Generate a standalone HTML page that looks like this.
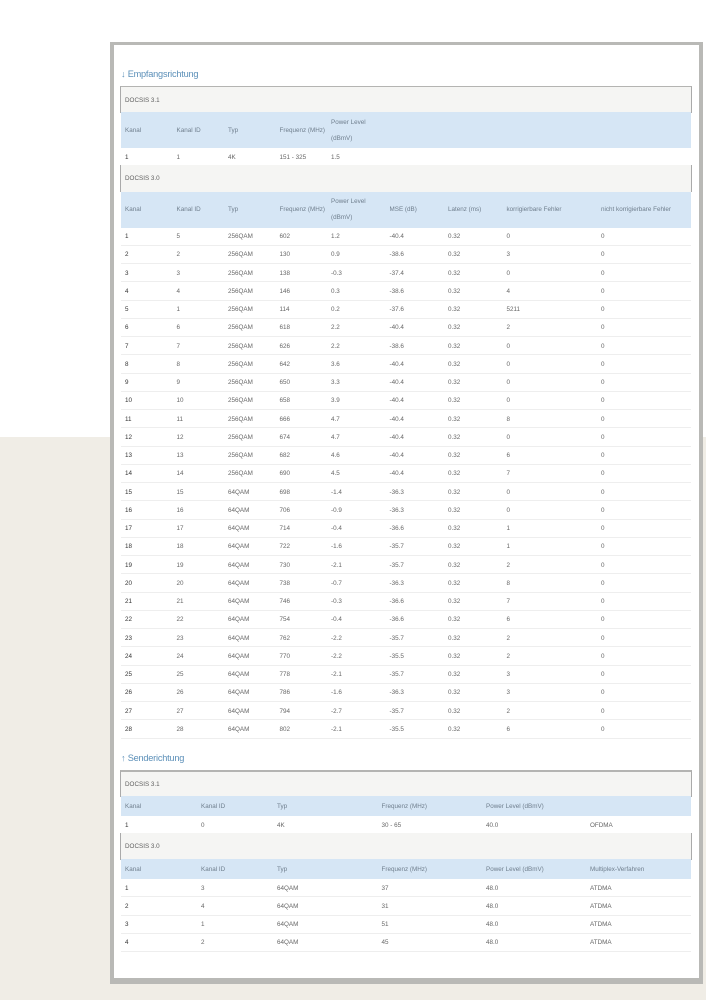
<!DOCTYPE html>
<html lang="de"><head><meta charset="utf-8"><title>Kabelinformationen</title>
<style>
html,body{margin:0;padding:0;background:#fff}
body{width:706px;height:999px;position:relative;overflow:hidden;font-family:"Liberation Sans",sans-serif;font-size:6.3px;color:#666;filter:blur(.35px)}
#bg{position:absolute;left:0;top:436.5px;width:706px;height:563px;background:#f0ede6}
#panel{position:absolute;left:110px;top:42px;width:593px;height:942px;box-sizing:border-box;background:#fff;border:4px solid #b9b9b6;border-top-width:3px;border-bottom-width:6px}
.t{position:absolute;left:121px;color:#5b8fb8;font-size:9.2px;letter-spacing:-.22px;line-height:14px;white-space:nowrap}
.h{position:absolute;left:120px;width:572px;box-sizing:border-box;background:#f5f5f3;border-left:1px solid #aaa;border-right:1px solid #aaa;height:27px;line-height:27px;padding-left:4px;color:#5f5f5f;white-space:nowrap}
.h.top{border-top:1px solid #b4b4b2;line-height:27px}
.b{position:absolute;left:121px;width:570px;background:#d6e6f5}
.r{position:absolute;left:121px;width:570px;height:18.25px;box-sizing:border-box;border-bottom:1px solid #eee;line-height:18px}
.n{border-bottom:0}
.r span,.b span{position:absolute;top:.5px;white-space:nowrap}
.b span{color:#6f7e8d}
.r span:first-child{color:#333;font-weight:normal}
.a span:nth-child(1){left:4px}.a span:nth-child(2){left:55.5px}.a span:nth-child(3){left:107px}.a span:nth-child(4){left:158.5px}.a span:nth-child(5){left:210px}.a span:nth-child(6){left:268.5px}.a span:nth-child(7){left:327px}.a span:nth-child(8){left:385.5px}.a span:nth-child(9){left:480px}
.c span:nth-child(1){left:4px}.c span:nth-child(2){left:80px}.c span:nth-child(3){left:156px}.c span:nth-child(4){left:260.5px}.c span:nth-child(5){left:365px}.c span:nth-child(6){left:469px}
.b.a{line-height:36px;height:36px}
.b.a span.two{top:2.5px;line-height:16px}
.b.c{height:20px;line-height:20px}
</style></head><body>
<div id="bg"></div>
<div id="panel"></div>

<div class="t" style="top:67px">↓ Empfangsrichtung</div>
<div class="h top" style="top:86px">DOCSIS 3.1</div>
<div class="b a" style="top:112px"><span>Kanal</span><span>Kanal ID</span><span>Typ</span><span>Frequenz (MHz)</span><span class="two">Power Level<br>(dBmV)</span></div>
<div class="r a n" style="top:148px"><span>1</span><span>1</span><span>4K</span><span>151 - 325</span><span>1.5</span></div>
<div class="h" style="top:165px">DOCSIS 3.0</div>
<div class="b a" style="top:191.5px"><span>Kanal</span><span>Kanal ID</span><span>Typ</span><span>Frequenz (MHz)</span><span class="two">Power Level<br>(dBmV)</span><span>MSE (dB)</span><span>Latenz (ms)</span><span>korrigierbare Fehler</span><span>nicht korrigierbare Fehler</span></div>

<div class="r a" style="top:227.5px"><span>1</span><span>5</span><span>256QAM</span><span>602</span><span>1.2</span><span>-40.4</span><span>0.32</span><span>0</span><span>0</span></div>
<div class="r a" style="top:245.75px"><span>2</span><span>2</span><span>256QAM</span><span>130</span><span>0.9</span><span>-38.6</span><span>0.32</span><span>3</span><span>0</span></div>
<div class="r a" style="top:264px"><span>3</span><span>3</span><span>256QAM</span><span>138</span><span>-0.3</span><span>-37.4</span><span>0.32</span><span>0</span><span>0</span></div>
<div class="r a" style="top:282.25px"><span>4</span><span>4</span><span>256QAM</span><span>146</span><span>0.3</span><span>-38.6</span><span>0.32</span><span>4</span><span>0</span></div>
<div class="r a" style="top:300.5px"><span>5</span><span>1</span><span>256QAM</span><span>114</span><span>0.2</span><span>-37.6</span><span>0.32</span><span>5211</span><span>0</span></div>
<div class="r a" style="top:318.75px"><span>6</span><span>6</span><span>256QAM</span><span>618</span><span>2.2</span><span>-40.4</span><span>0.32</span><span>2</span><span>0</span></div>
<div class="r a" style="top:337px"><span>7</span><span>7</span><span>256QAM</span><span>626</span><span>2.2</span><span>-38.6</span><span>0.32</span><span>0</span><span>0</span></div>
<div class="r a" style="top:355.25px"><span>8</span><span>8</span><span>256QAM</span><span>642</span><span>3.6</span><span>-40.4</span><span>0.32</span><span>0</span><span>0</span></div>
<div class="r a" style="top:373.5px"><span>9</span><span>9</span><span>256QAM</span><span>650</span><span>3.3</span><span>-40.4</span><span>0.32</span><span>0</span><span>0</span></div>
<div class="r a" style="top:391.75px"><span>10</span><span>10</span><span>256QAM</span><span>658</span><span>3.9</span><span>-40.4</span><span>0.32</span><span>0</span><span>0</span></div>
<div class="r a" style="top:410px"><span>11</span><span>11</span><span>256QAM</span><span>666</span><span>4.7</span><span>-40.4</span><span>0.32</span><span>8</span><span>0</span></div>
<div class="r a" style="top:428.25px"><span>12</span><span>12</span><span>256QAM</span><span>674</span><span>4.7</span><span>-40.4</span><span>0.32</span><span>0</span><span>0</span></div>
<div class="r a" style="top:446.5px"><span>13</span><span>13</span><span>256QAM</span><span>682</span><span>4.6</span><span>-40.4</span><span>0.32</span><span>6</span><span>0</span></div>
<div class="r a" style="top:464.75px"><span>14</span><span>14</span><span>256QAM</span><span>690</span><span>4.5</span><span>-40.4</span><span>0.32</span><span>7</span><span>0</span></div>
<div class="r a" style="top:483px"><span>15</span><span>15</span><span>64QAM</span><span>698</span><span>-1.4</span><span>-36.3</span><span>0.32</span><span>0</span><span>0</span></div>
<div class="r a" style="top:501.25px"><span>16</span><span>16</span><span>64QAM</span><span>706</span><span>-0.9</span><span>-36.3</span><span>0.32</span><span>0</span><span>0</span></div>
<div class="r a" style="top:519.5px"><span>17</span><span>17</span><span>64QAM</span><span>714</span><span>-0.4</span><span>-36.6</span><span>0.32</span><span>1</span><span>0</span></div>
<div class="r a" style="top:537.75px"><span>18</span><span>18</span><span>64QAM</span><span>722</span><span>-1.6</span><span>-35.7</span><span>0.32</span><span>1</span><span>0</span></div>
<div class="r a" style="top:556px"><span>19</span><span>19</span><span>64QAM</span><span>730</span><span>-2.1</span><span>-35.7</span><span>0.32</span><span>2</span><span>0</span></div>
<div class="r a" style="top:574.25px"><span>20</span><span>20</span><span>64QAM</span><span>738</span><span>-0.7</span><span>-36.3</span><span>0.32</span><span>8</span><span>0</span></div>
<div class="r a" style="top:592.5px"><span>21</span><span>21</span><span>64QAM</span><span>746</span><span>-0.3</span><span>-36.6</span><span>0.32</span><span>7</span><span>0</span></div>
<div class="r a" style="top:610.75px"><span>22</span><span>22</span><span>64QAM</span><span>754</span><span>-0.4</span><span>-36.6</span><span>0.32</span><span>6</span><span>0</span></div>
<div class="r a" style="top:629px"><span>23</span><span>23</span><span>64QAM</span><span>762</span><span>-2.2</span><span>-35.7</span><span>0.32</span><span>2</span><span>0</span></div>
<div class="r a" style="top:647.25px"><span>24</span><span>24</span><span>64QAM</span><span>770</span><span>-2.2</span><span>-35.5</span><span>0.32</span><span>2</span><span>0</span></div>
<div class="r a" style="top:665.5px"><span>25</span><span>25</span><span>64QAM</span><span>778</span><span>-2.1</span><span>-35.7</span><span>0.32</span><span>3</span><span>0</span></div>
<div class="r a" style="top:683.75px"><span>26</span><span>26</span><span>64QAM</span><span>786</span><span>-1.6</span><span>-36.3</span><span>0.32</span><span>3</span><span>0</span></div>
<div class="r a" style="top:702px"><span>27</span><span>27</span><span>64QAM</span><span>794</span><span>-2.7</span><span>-35.7</span><span>0.32</span><span>2</span><span>0</span></div>
<div class="r a" style="top:720.25px"><span>28</span><span>28</span><span>64QAM</span><span>802</span><span>-2.1</span><span>-35.5</span><span>0.32</span><span>6</span><span>0</span></div>

<div class="t" style="top:751px">↑ Senderichtung</div>
<div class="h top" style="top:770px;border-top-width:2px;line-height:26px">DOCSIS 3.1</div>
<div class="b c" style="top:796px"><span>Kanal</span><span>Kanal ID</span><span>Typ</span><span>Frequenz (MHz)</span><span>Power Level (dBmV)</span></div>
<div class="r c n" style="top:816px"><span>1</span><span>0</span><span>4K</span><span>30 - 65</span><span>40.0</span><span>OFDMA</span></div>
<div class="h" style="top:833px">DOCSIS 3.0</div>
<div class="b c" style="top:859px"><span>Kanal</span><span>Kanal ID</span><span>Typ</span><span>Frequenz (MHz)</span><span>Power Level (dBmV)</span><span>Multiplex-Verfahren</span></div>
<div class="r c" style="top:879px"><span>1</span><span>3</span><span>64QAM</span><span>37</span><span>48.0</span><span>ATDMA</span></div>
<div class="r c" style="top:897.25px"><span>2</span><span>4</span><span>64QAM</span><span>31</span><span>48.0</span><span>ATDMA</span></div>
<div class="r c" style="top:915.5px"><span>3</span><span>1</span><span>64QAM</span><span>51</span><span>48.0</span><span>ATDMA</span></div>
<div class="r c" style="top:933.75px"><span>4</span><span>2</span><span>64QAM</span><span>45</span><span>48.0</span><span>ATDMA</span></div>
</body></html>
